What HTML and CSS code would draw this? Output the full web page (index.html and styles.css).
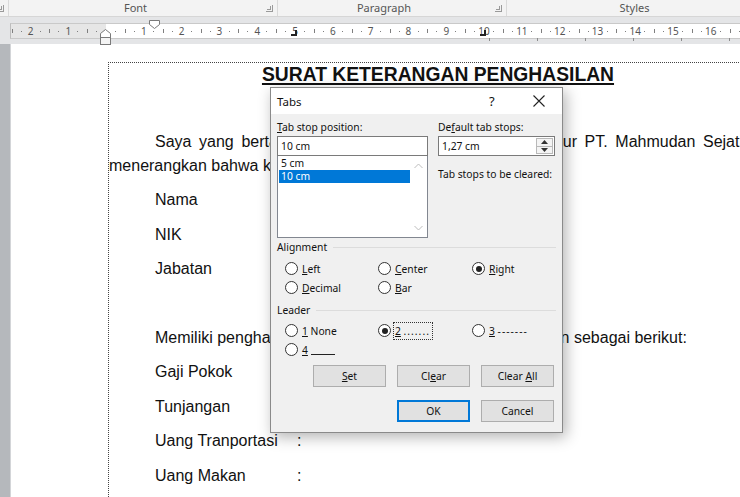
FILE: index.html
```html
<!DOCTYPE html>
<html lang="en">
<head>
    <meta charset="UTF-8">
    <title>Tabs</title>
    <link rel="stylesheet" href="styles.css">
</head>
<body>

    <!-- ribbon group labels -->
    <div class="ribbon">
        <div class="grp grp-prev"><i class="launcher"></i></div>
        <div class="grp grp-font"><span>Font</span><i class="launcher"></i></div>
        <div class="grp grp-para"><span>Paragraph</span><i class="launcher"></i></div>
        <div class="grp grp-styles"><span>Styles</span></div>
    </div>

    <!-- horizontal ruler -->
    <div class="ruler-area">
        <div class="ruler">
            <div class="scale">
                <span>2</span><span>1</span><span></span><span>1</span><span>2</span><span>3</span>
                <span>4</span><span>5</span><span>6</span><span>7</span><span>8</span><span>9</span>
                <span>10</span><span>11</span><span>12</span><span>13</span><span>14</span><span>15</span>
                <span>16</span><span>17</span>
            </div>
            <svg class="mark first-indent" width="11" height="9" viewBox="0 0 11 9"><path d="M0.5 0.5H10.5V4.5L5.5 8.5L0.5 4.5Z" fill="#fff" stroke="#7a7a7a"/></svg>
            <svg class="mark hang-indent" width="11" height="16" viewBox="0 0 11 16"><path d="M5.5 0.5L10.5 4.5V8.5H0.5V4.5Z" fill="#fff" stroke="#7a7a7a"/><rect x="0.5" y="8.5" width="10" height="7" fill="#f4f4f4" stroke="#7a7a7a"/></svg>
            <svg class="mark tab-5" width="6" height="6" viewBox="0 0 6 6"><path d="M5 0V5H0" fill="none" stroke="#222" stroke-width="2"/></svg>
            <svg class="mark tab-10" width="6" height="6" viewBox="0 0 6 6"><path d="M5 0V5H0" fill="none" stroke="#222" stroke-width="2"/></svg>
        </div>
        <div class="deftabs">
            <i></i><i></i><i></i><i></i><i></i><i></i>
        </div>
    </div>

    <!-- document -->
    <div class="workspace">
        <div class="vruler"></div>
        <div class="page">
            <div class="textbox">
                <p class="title">SURAT KETERANGAN PENGHASILAN</p>
                <p>&nbsp;</p>
                <p class="para first">Saya yang bertanda tangan di bawah ini selaku Direktur PT. Mahmudan Sejati menerangkan bahwa karyawan di bawah ini:</p>
                <p class="row"><span class="lbl">Nama</span><span>:</span></p>
                <p class="row"><span class="lbl">NIK</span><span>:</span></p>
                <p class="row"><span class="lbl">Jabatan</span><span>:</span></p>
                <p>&nbsp;</p>
                <p class="para">Memiliki penghasilan tetap setiap bulannya dengan rincian sebagai berikut:</p>
                <p class="row"><span class="lbl">Gaji Pokok</span><span>:</span></p>
                <p class="row"><span class="lbl">Tunjangan</span><span>:</span></p>
                <p class="row"><span class="lbl">Uang Tranportasi</span><span>:</span></p>
                <p class="row"><span class="lbl">Uang Makan</span><span>:</span></p>
            </div>
        </div>
    </div>

    <!-- Tabs dialog -->
    <div class="dlg">
        <div class="dlg-title">
            <span class="dlg-name">Tabs</span>
            <span class="help">?</span>
            <svg class="close" width="12" height="12" viewBox="0 0 12 12"><path d="M0.5 0.5L11.5 11.5M11.5 0.5L0.5 11.5" stroke="#222" stroke-width="1.1"/></svg>
        </div>
        <div class="dlg-body">
            <div class="top">
                <div class="col-left">
                    <div class="lab"><u>T</u>ab stop position:</div>
                    <div class="field">10 cm</div>
                    <div class="list">
                        <div class="items">
                            <div class="item">5 cm</div>
                            <div class="item sel">10 cm</div>
                        </div>
                        <div class="sbar">
                            <svg width="9" height="6" viewBox="0 0 9 6"><path d="M0.5 5L4.5 1L8.5 5" fill="none" stroke="#bdbdbd"/></svg>
                            <svg width="9" height="6" viewBox="0 0 9 6"><path d="M0.5 1L4.5 5L8.5 1" fill="none" stroke="#bdbdbd"/></svg>
                        </div>
                    </div>
                </div>
                <div class="col-right">
                    <div class="lab">De<u>f</u>ault tab stops:</div>
                    <div class="field spin">
                        <span>1,27 cm</span>
                        <div class="spin-btns">
                            <div class="sb"><svg width="7" height="4" viewBox="0 0 7 4"><path d="M0 4L3.5 0L7 4Z" fill="#333"/></svg></div>
                            <div class="sb"><svg width="7" height="4" viewBox="0 0 7 4"><path d="M0 0L3.5 4L7 0Z" fill="#333"/></svg></div>
                        </div>
                    </div>
                    <div class="cleared">Tab stops to be cleared:</div>
                </div>
            </div>

            <div class="group-head"><span>Alignment</span><i></i></div>
            <div class="radios">
                <div class="radio"><i class="dot"></i><span><u>L</u>eft</span></div>
                <div class="radio"><i class="dot"></i><span><u>C</u>enter</span></div>
                <div class="radio"><i class="dot on"></i><span><u>R</u>ight</span></div>
                <div class="radio"><i class="dot"></i><span><u>D</u>ecimal</span></div>
                <div class="radio"><i class="dot"></i><span><u>B</u>ar</span></div>
            </div>

            <div class="group-head leader-head"><span>Leader</span><i></i></div>
            <div class="radios">
                <div class="radio"><i class="dot"></i><span><u>1</u> None</span></div>
                <div class="radio"><i class="dot on"></i><span class="focus"><u>2</u> <span class="fill">.......</span></span></div>
                <div class="radio"><i class="dot"></i><span><u>3</u> <span class="fill">-------</span></span></div>
                <div class="radio"><i class="dot"></i><span><u>4</u> <span class="uline"></span></span></div>
            </div>

            <div class="btn-row">
                <div class="btn"><u>S</u>et</div>
                <div class="btn">Cl<u>e</u>ar</div>
                <div class="btn">Clear <u>A</u>ll</div>
            </div>
            <div class="btn-row ok-row">
                <div class="btn default">OK</div>
                <div class="btn">Cancel</div>
            </div>
        </div>
    </div>

</body>
</html>
```

FILE: styles.css
```css
body {
    margin: 0;
    width: 740px;
    height: 497px;
    overflow: hidden;
    position: relative;
    background-color: #fff;
    font-family: "Liberation Sans", Arial, sans-serif;
}

/* ribbon labels */
.ribbon {
    display: flex;
    height: 16px;
    background-color: #f3f3f3;
    border-bottom: 1px solid #d6d6d6;
    font-family: "Noto Sans", sans-serif;
    font-size: 11px;
    color: #555;
}
.grp {
    position: relative;
    display: flex;
    align-items: center;
    justify-content: center;
    border-right: 1px solid #dadada;
    line-height: 16px;
}
.grp-prev { width: 8px; }
.grp-font { width: 269px; padding-right: 15px; box-sizing: border-box; }
.grp-para { width: 229px; padding-right: 16px; box-sizing: border-box; }
.grp-styles { flex: 1; padding-left: 22px; border-right: none; }
.launcher {
    position: absolute;
    right: 4px;
    top: 5px;
    width: 6px;
    height: 6px;
    border-right: 1px solid #9a9a9a;
    border-bottom: 1px solid #9a9a9a;
}
.launcher::after {
    content: "";
    position: absolute;
    left: 1px;
    top: 1px;
    width: 3px;
    height: 3px;
    border-right: 1px solid #9a9a9a;
    border-bottom: 1px solid #9a9a9a;
}

/* horizontal ruler */
.ruler-area {
    position: relative;
    height: 27px;
    background-color: #e4e5e7;
}
.ruler {
    position: absolute;
    left: 10px;
    top: 6px;
    right: 0;
    height: 14px;
    border-top: 1px solid #c9c9c9;
    border-bottom: 1px solid #c9c9c9;
    border-left: 1px solid #bdbdbd;
    background: linear-gradient(to right, #e6e6e6 95px, #fff 95px);
}
.scale {
    display: flex;
    height: 14px;
    margin-left: 0.6px;
    font-family: "Noto Sans", sans-serif;
    font-size: 10px;
    color: #555;
}
.scale span {
    flex: 0 0 37.8px;
    line-height: 14px;
    text-align: center;
    background:
        linear-gradient(#7f7f7f, #7f7f7f) 0 5px / 1px 4px no-repeat,
        linear-gradient(#7f7f7f, #7f7f7f) 9px 7px / 1px 1px no-repeat,
        linear-gradient(#7f7f7f, #7f7f7f) 28px 7px / 1px 1px no-repeat;
}
.mark { position: absolute; }
.first-indent { left: 138px; top: -4px; }
.hang-indent { left: 89px; top: 5px; }
.tab-5 { left: 280px; top: 6px; }
.tab-10 { left: 469px; top: 6px; }
.deftabs {
    position: absolute;
    left: 489px;
    top: 21px;
    display: flex;
    gap: 47px;
}
.deftabs i {
    width: 1px;
    height: 3px;
    background-color: #8c8c8c;
}

/* document */
.workspace {
    display: flex;
    height: 453px;
}
.vruler {
    flex: 0 0 10px;
    background-color: #b5b8bc;
    border-right: 1px solid #d3d5d8;
}
.page {
    flex: 1;
    min-width: 0;
    overflow: hidden;
    padding: 18px 0 0 97px;
    background-color: #fff;
}
.textbox {
    width: 658px;
    height: 460px;
    border-top: 1px dotted #444;
    border-left: 1px dotted #444;
    font-size: 16px;
    line-height: 24px;
    color: #111;
}
.textbox p {
    margin: 0 0 10.5px 0;
}
.textbox .title {
    font-size: 19.3px;
    text-align: center;
    font-weight: bold;
    text-decoration: underline;
    text-decoration-thickness: 2px;
    text-underline-offset: 2px;
    margin-bottom: 8.5px;
}
.textbox .para {
    text-indent: 46px;
    text-align: justify;
    margin-bottom: 10px;
}
.textbox .first {
    margin-right: 24px;
}
.row {
    display: flex;
    padding-left: 46px;
}
.lbl {
    width: 142px;
}

/* tabs dialog */
.dlg {
    position: absolute;
    left: 270px;
    top: 87px;
    width: 291px;
    height: 344px;
    border: 1px solid #8a8a8a;
    background-color: #f0f0f0;
    box-shadow: 3px 4px 14px rgba(0, 0, 0, 0.3);
    font-family: "Noto Sans", sans-serif;
    font-size: 10.3px;
    color: #111;
}
.dlg u { text-decoration: underline; text-underline-offset: 1px; }
.dlg-title {
    position: relative;
    height: 26px;
    background-color: #fff;
    display: flex;
    align-items: center;
    padding-left: 6px;
}
.dlg-name { font-size: 11.5px; }
.help {
    position: absolute;
    left: 218px;
    top: 4px;
    font-size: 13px;
}
.close {
    position: absolute;
    left: 262px;
    top: 7px;
}
.dlg-body {
    padding: 6px 8px 9px 6px;
}
.top {
    display: flex;
    gap: 10px;
}
.col-left { width: 151px; }
.col-right { flex: 1; margin-right: -1px; white-space: nowrap; }
.lab {
    line-height: 14px;
    margin-bottom: 2px;
}
.field {
    height: 18px;
    border: 1px solid #7a7a7a;
    background-color: #fff;
    padding-left: 3px;
    line-height: 18px;
}
.list {
    display: flex;
    height: 81px;
    border: 1px solid #828790;
    border-top: none;
    background-color: #fff;
}
.items {
    flex: 1;
    padding: 1px 0 0 1px;
}
.item {
    height: 13px;
    line-height: 13px;
    padding-left: 2px;
}
.item.sel {
    background-color: #0078d7;
    color: #fff;
}
.sbar {
    width: 17px;
    display: flex;
    flex-direction: column;
    justify-content: space-between;
    align-items: center;
    padding: 7px 0 6px;
}
.spin {
    display: flex;
    justify-content: space-between;
    padding-right: 1px;
}
.spin-btns {
    width: 15px;
    margin: 1px 0;
    border: 1px solid #b9b9b9;
    display: flex;
    flex-direction: column;
}
.sb {
    flex: 1;
    display: flex;
    align-items: center;
    justify-content: center;
    background-color: #f4f4f4;
}
.sb + .sb { border-top: 1px solid #b9b9b9; }
.cleared {
    margin-top: 11px;
    line-height: 14px;
}
.group-head {
    display: flex;
    align-items: center;
    margin-top: 2px;
    margin-right: -2px;
    line-height: 14px;
}
.group-head i {
    flex: 1;
    height: 1px;
    margin-left: 6px;
    background-color: #dcdcdc;
}
.leader-head { margin-top: 6px; }
.radios {
    display: grid;
    grid-template-columns: 93px 94px auto;
    grid-auto-rows: 19px;
    padding: 5px 0 0 8px;
}
.leader-head + .radios { padding-top: 4px; }
.radio {
    display: flex;
    align-items: center;
}
.dot {
    position: relative;
    width: 11px;
    height: 11px;
    border: 1px solid #333;
    border-radius: 50%;
    background-color: #fff;
    margin-right: 4px;
}
.dot.on::after {
    content: "";
    position: absolute;
    left: 2.5px;
    top: 2.5px;
    width: 6px;
    height: 6px;
    border-radius: 50%;
    background-color: #222;
}
.focus {
    outline: 1px dotted #333;
    outline-offset: 1px;
    padding-right: 1px;
}
.fill {
    letter-spacing: 1px;
}
.uline {
    display: inline-block;
    width: 24px;
    border-bottom: 1px solid #222;
    vertical-align: -1px;
}
.btn-row {
    display: flex;
    justify-content: flex-end;
    gap: 11px;
    margin-top: 6px;
}
.ok-row { margin-top: 13px; }
.btn {
    width: 71px;
    height: 20px;
    line-height: 20px;
    text-align: center;
    border: 1px solid #adadad;
    background-color: #e1e1e1;
}
.btn.default {
    border: 2px solid #0078d7;
    width: 69px;
    height: 18px;
    line-height: 18px;
}
```
